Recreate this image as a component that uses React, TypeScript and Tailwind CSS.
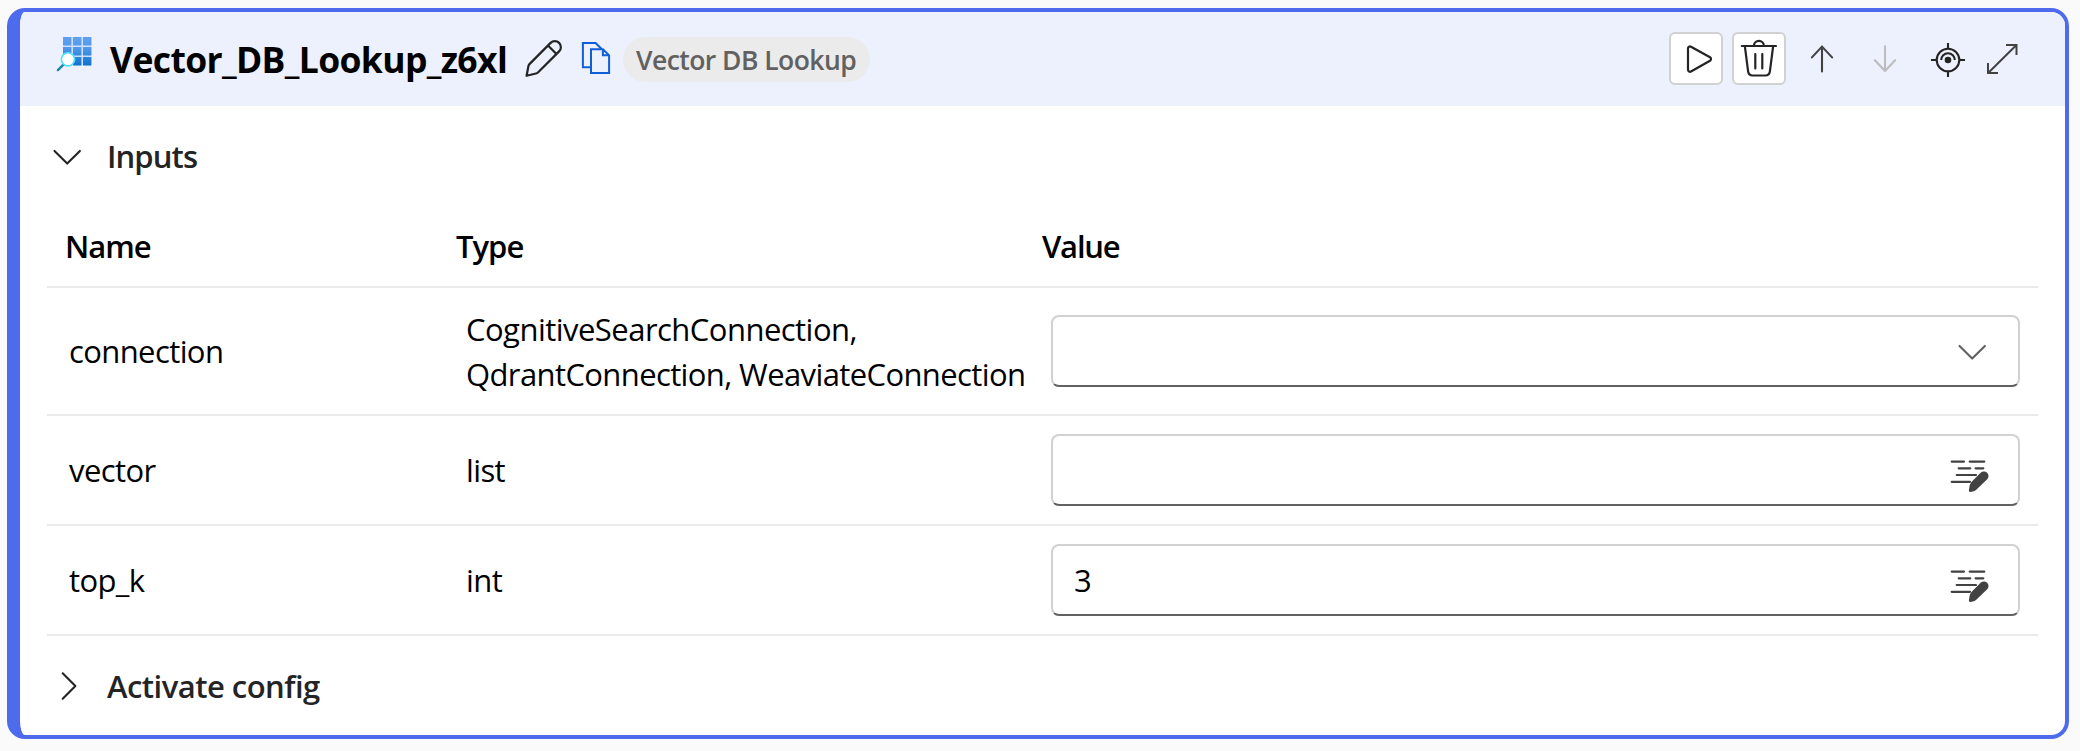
import React from "react";

type IconProps = { className?: string };

const LogoIcon = ({ className }: IconProps) => (
  <svg width="36" height="36" viewBox="0 0 36 36" className={className}>
    <defs>
      <linearGradient id="cells" x1="0" y1="1" x2="0" y2="29" gradientUnits="userSpaceOnUse">
        <stop offset="0" stopColor="#5ea0ef" />
        <stop offset="0.35" stopColor="#559bec" />
        <stop offset="1" stopColor="#0f74d0" />
      </linearGradient>
    </defs>
    <rect x="7" y="1" width="28.4" height="28.6" rx="0.8" fill="#cfdffa" />
    {[1, 11, 21].map((y) =>
      [7, 17, 27].map((x) => (
        <rect key={`${x}-${y}`} x={x} y={y} width="8.4" height="8.4" rx="0.4" fill="url(#cells)" />
      )),
    )}
    <path d="M7.4 28.6 1.9 34.1" stroke="#1f86ab" strokeWidth="2.4" strokeLinecap="round" />
    <circle cx="12" cy="23.3" r="6.6" fill="#fff" stroke="#50e1f9" strokeWidth="1.6" />
  </svg>
);

const PencilIcon = ({ className }: IconProps) => (
  <svg width="40" height="40" viewBox="0 0 40 40" fill="none" stroke="#242424" strokeWidth="2.2" strokeLinejoin="round" className={className}>
    <path d="M2.6 36.8 4.4 27.3Q4.7 25.9 5.7 24.9L26.6 3.9a6 6 0 0 1 8.5 8.5L14.2 33.2Q13.2 34.2 11.9 34.5Z" />
    <path d="m24.2 6.8 8 8" />
  </svg>
);

const CopyIcon = ({ className }: IconProps) => (
  <svg width="32" height="34" viewBox="0 0 32 34" fill="none" stroke="#0f5fd8" strokeWidth="2" className={className}>
    <path d="M11 25.2H2.9V1H15.6L21.6 7" />
    <path d="M11 7.2H22.9L29.1 13.4V31H11Z" />
    <path d="M22.9 7.2V13.2H29" />
  </svg>
);

const PlayIcon = () => (
  <svg width="50" height="49" viewBox="2 2 50 49" fill="none" stroke="#242424" strokeWidth="2.2" strokeLinejoin="round">
    <path d="M19 16.4v21.4a2 2 0 0 0 3 1.7L41 28.8a2 2 0 0 0 0-3.5L22 14.7a2 2 0 0 0-3 1.7Z" />
  </svg>
);

const TrashIcon = () => (
  <svg width="50" height="49" viewBox="2 2 50 49" fill="none" stroke="#242424" strokeWidth="2.2" strokeLinecap="round">
    <path d="M9.8 14H44" />
    <path d="M22 13.5a4.9 4.6 0 0 1 9.8 0" />
    <path d="M12.9 14.5 16.1 39.4Q16.6 43.5 20.6 43.5H33.4Q37.4 43.5 37.9 39.4L41.1 14.5" />
    <path d="M23.3 22V36.4M30.3 22V36.4" />
  </svg>
);

const ArrowUpIcon = () => (
  <svg width="28" height="28" viewBox="0 0 28 28" fill="none" stroke="#424242" strokeWidth="2.1" strokeLinecap="round" strokeLinejoin="round">
    <path d="M14 26.5V1.6M3.9 12.4 14 1.6 24.1 12.4" />
  </svg>
);

const ArrowDownIcon = () => (
  <svg width="28" height="28" viewBox="0 0 28 28" fill="none" stroke="#bdbdbd" strokeWidth="2.1" strokeLinecap="round" strokeLinejoin="round">
    <path d="M14 1.3V26M3.9 15.2 14 26 24.1 15.2" />
  </svg>
);

const TargetIcon = () => (
  <svg width="36" height="36" viewBox="-18 -18 36 36" fill="none" stroke="#242424" strokeWidth="2.1" className="mt-0.5">
    <circle r="11.3" />
    <path d="M0-17V-11M0 17V11M-17 0H-11M17 0H11" />
    <path d="M-6.8 0a6.8 6.8 0 0 1 13.6 0" />
    <circle r="3.3" fill="#242424" stroke="none" />
  </svg>
);

const ExpandIcon = () => (
  <svg width="32" height="32" viewBox="0 0 32 32" fill="none" stroke="#424242" strokeWidth="2">
    <path d="M2.4 29.8 30.2 2.2M20 2H30.5V12M2 20V30H12" />
  </svg>
);

const ChevronDown = ({ className }: IconProps) => (
  <svg width="30" height="18" viewBox="0 0 30 18" fill="none" stroke="currentColor" strokeWidth="2.1" strokeLinecap="round" strokeLinejoin="round" className={className}>
    <path d="M2.5 2.9 15.2 15.6 27.9 2.9" />
  </svg>
);

const ChevronRight = ({ className }: IconProps) => (
  <svg width="18" height="30" viewBox="0 0 18 30" fill="none" stroke="currentColor" strokeWidth="2.1" strokeLinecap="round" strokeLinejoin="round" className={className}>
    <path d="M2.7 2.3 15.4 15 2.7 27.7" />
  </svg>
);

const EditLinesIcon = () => (
  <svg width="40" height="34" viewBox="0 0 40 34" fill="none" stroke="#424242" strokeWidth="2.2" strokeLinecap="round">
    <path d="M1.7 2.6H14M19.7 2.6H34.3M8.7 9.3H20.3M25.6 9.3H33.3M6.7 16H26M1.7 22.8H20" />
    <path
      d="M30.6 13.8a4.6 4.6 0 0 1 6.6 6.5L26 31.1Q25 32 23.7 32.3L20.3 32.9Q18.8 33.1 18.9 31.6L19.4 28Q19.7 25.5 21.2 23.3Z"
      fill="#424242"
      stroke="none"
    />
  </svg>
);

const Field = ({ value, children }: { value?: string; children: React.ReactNode }) => (
  <div className="ml-2.5 mr-[18px] flex h-[72px] items-center justify-between rounded-lg border-2 border-[#d1d1d1] border-b-[#616161] bg-white pl-[21px]">
    <span>{value}</span>
    {children}
  </div>
);

type RowProps = { name: string; nameClass: string; type: React.ReactNode; height: string; children: React.ReactNode };

const Row = ({ name, nameClass, type, height, children }: RowProps) => (
  <div className={`grid grid-cols-[408px_586px_1fr] items-center border-b-2 border-[#ebebeb] tracking-[-0.6px] ${height}`}>
    <div className={nameClass}>{name}</div>
    <div className="whitespace-nowrap pl-[11px] leading-[45px]">{type}</div>
    {children}
  </div>
);

const buttonClass = "flex h-[53px] w-[54px] items-center justify-center rounded-md border-2 border-[#d1d1d1] bg-white";
const slotClass = "flex h-[53px] w-[54px] items-center justify-center";

export default function App() {
  return (
    <div className="flex h-[751px] bg-[#fafafa] pb-3 pl-[7px] pr-[11px] pt-2 font-['Open_Sans',sans-serif] text-[31px] leading-10 text-black">
      <div className="flex grow flex-col overflow-hidden rounded-[18px] border-4 border-l-[13px] border-[#4f6bed] bg-white">
        <header className="flex h-[94px] shrink-0 items-center bg-[#edf0fd] pl-9 pr-9">
          <LogoIcon className="mb-2.5" />
          <h1 className="ml-[18px] w-[414px] whitespace-nowrap text-[35.5px] font-bold tracking-[-0.64px]">Vector_DB_Lookup_z6xl</h1>
          <PencilIcon />
          <CopyIcon className="ml-4" />
          <span className="ml-[11px] flex h-[45px] w-[247px] items-center whitespace-nowrap rounded-full bg-[#ebebeb] pl-[13px] pt-[2px] text-[26.5px] font-semibold tracking-[-0.55px] text-[#616161]">
            Vector DB Lookup
          </span>
          <div className="ml-auto flex gap-[9px]">
            <button className={`${buttonClass} -mt-px`}><PlayIcon /></button>
            <button className={`${buttonClass} -mt-px`}><TrashIcon /></button>
            <button className={slotClass}><ArrowUpIcon /></button>
            <button className={slotClass}><ArrowDownIcon /></button>
            <div className="flex">
              <button className={slotClass}><TargetIcon /></button>
              <button className={slotClass}><ExpandIcon /></button>
            </div>
          </div>
        </header>

        <div className="flex h-[100px] items-center pl-8 font-semibold text-[#242424]">
          <ChevronDown className="mt-0.5" />
          <span className="ml-[25px] tracking-[-0.9px]">Inputs</span>
        </div>

        <div className="ml-[27px] mr-[27px]">
          <div className="grid h-[82px] grid-cols-[408px_586px_1fr] items-center border-b-2 border-[#ebebeb] font-semibold tracking-[-1px]">
            <div className="pl-[18px]">Name</div>
            <div className="pl-px">Type</div>
            <div className="pl-px tracking-[-1.2px]">Value</div>
          </div>
          <Row name="connection" nameClass="pl-[22px]" height="h-32" type={<div className="pt-px tracking-[-0.61px]"><span className="tracking-[-0.53px]">CognitiveSearchConnection,</span><br />QdrantConnection, WeaviateConnection</div>}>
            <Field>
              <ChevronDown className="mr-[31px] mt-0.5 text-[#616161]" />
            </Field>
          </Row>
          <Row name="vector" nameClass="pl-[22px]" height="h-[110px]" type="list">
            <Field>
              <div className="mr-7 mt-3"><EditLinesIcon /></div>
            </Field>
          </Row>
          <Row name="top_k" nameClass="pl-[22px]" height="h-[110px]" type="int">
            <Field value="3">
              <div className="mr-7 mt-3"><EditLinesIcon /></div>
            </Field>
          </Row>
        </div>

        <div className="flex grow items-center pl-10 font-semibold text-[#242424]">
          <ChevronRight />
          <span className="ml-[29px] tracking-[-0.52px]">Activate config</span>
        </div>
      </div>
    </div>
  );
}
